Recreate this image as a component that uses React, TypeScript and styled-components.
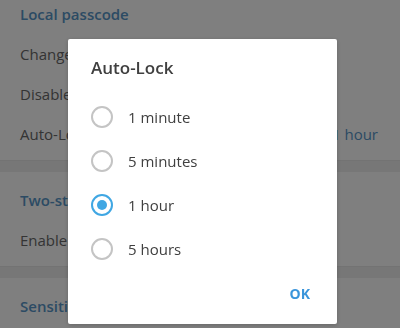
import styled, {createGlobalStyle} from 'styled-components';

const GlobalStyle = createGlobalStyle`
  html, body {
    margin: 0;
    padding: 0;
    background: #ffffff;
    overflow: hidden;
  }
  body {
    font-family: 'Open Sans', 'Noto Sans', sans-serif;
  }
`;

type Section = {title: string; rows: {label: string; value?: string}[]};

const sections: Section[] = [
  {
    title: 'Local passcode',
    rows: [{label: 'Change local passcode'}, {label: 'Disable local passcode'}, {label: 'Auto-Lock if away for', value: '1 hour'}],
  },
  {title: 'Two-step verification', rows: [{label: 'Enable two-step verification'}]},
  {title: 'Sensitive content', rows: []},
];

const options = ['1 minute', '5 minutes', '1 hour', '5 hours'];

const App = () => (
  <>
    <GlobalStyle />
    <Page>
      {sections.map((section, i) => (
        <div key={section.title}>
          {i > 0 && <Divider />}
          <SettingsSection>
            <SectionTitle>{section.title}</SectionTitle>
            {section.rows.map((row) => (
              <Row key={row.label}>
                <span>{row.label}</span>
                {row.value && <RowValue>{row.value}</RowValue>}
              </Row>
            ))}
          </SettingsSection>
        </div>
      ))}
    </Page>
    <Overlay>
      <Dialog>
        <DialogTitle>Auto-Lock</DialogTitle>
        <OptionList>
          {options.map((option) => (
            <Option key={option}>
              <Radio $checked={option === '1 hour'} />
              <OptionLabel>{option}</OptionLabel>
            </Option>
          ))}
        </OptionList>
        <Footer>
          <OkButton>OK</OkButton>
        </Footer>
      </Dialog>
    </Overlay>
  </>
);

export default App;

const Page = styled.div`
  margin-top: -14px;
  width: 400px;
`;

const Divider = styled.div`
  height: 12px;
  background: #efefef;
  box-shadow: inset 0 1px 1px rgba(0, 0, 0, 0.04);
`;

const SettingsSection = styled.div`
  padding: 8px 0 6px;
`;

const SectionTitle = styled.div`
  height: 40px;
  line-height: 40px;
  padding-left: 20px;
  font-size: 15px;
  font-weight: 600;
  color: #5896c8;
`;

const Row = styled.div`
  height: 40px;
  display: flex;
  align-items: center;
  justify-content: space-between;
  padding: 0 22px 0 20px;
  font-size: 15px;
  color: #686868;
`;

const RowValue = styled.span`
  color: #5896c8;
`;

const Overlay = styled.div`
  position: fixed;
  inset: 0;
  background: rgba(0, 0, 0, 0.5);
  padding: 39px 0 0 68px;
`;

const Dialog = styled.div`
  width: 269px;
  height: 285px;
  background: #ffffff;
  border-radius: 2px;
  box-shadow: 0 1px 4px rgba(0, 0, 0, 0.2);
  display: flex;
  flex-direction: column;
`;

const DialogTitle = styled.div`
  padding: 18px 0 0 23px;
  height: 56px;
  box-sizing: border-box;
  line-height: 22px;
  font-size: 17px;
  font-weight: 600;
  color: #404040;
`;

const OptionList = styled.div`
  display: flex;
  flex-direction: column;
`;

const Option = styled.div`
  height: 44px;
  display: flex;
  align-items: center;
  padding-left: 23px;
  gap: 15px;
`;

const Radio = styled.span<{$checked: boolean}>`
  width: 22px;
  height: 22px;
  box-sizing: border-box;
  border-radius: 50%;
  border: 2px solid ${({$checked}) => ($checked ? '#40a7e3' : '#c4c4c4')};
  display: flex;
  align-items: center;
  justify-content: center;

  &::after {
    content: '';
    width: 10px;
    height: 10px;
    border-radius: 50%;
    background: #40a7e3;
    display: ${({$checked}) => ($checked ? 'block' : 'none')};
  }
`;

const OptionLabel = styled.span`
  font-size: 15px;
  color: #404040;
`;

const Footer = styled.div`
  margin-top: auto;
  display: flex;
  justify-content: flex-end;
  padding: 0 27px 21px 0;
`;

const OkButton = styled.span`
  font-size: 14px;
  font-weight: 700;
  color: #3a95db;
`;
